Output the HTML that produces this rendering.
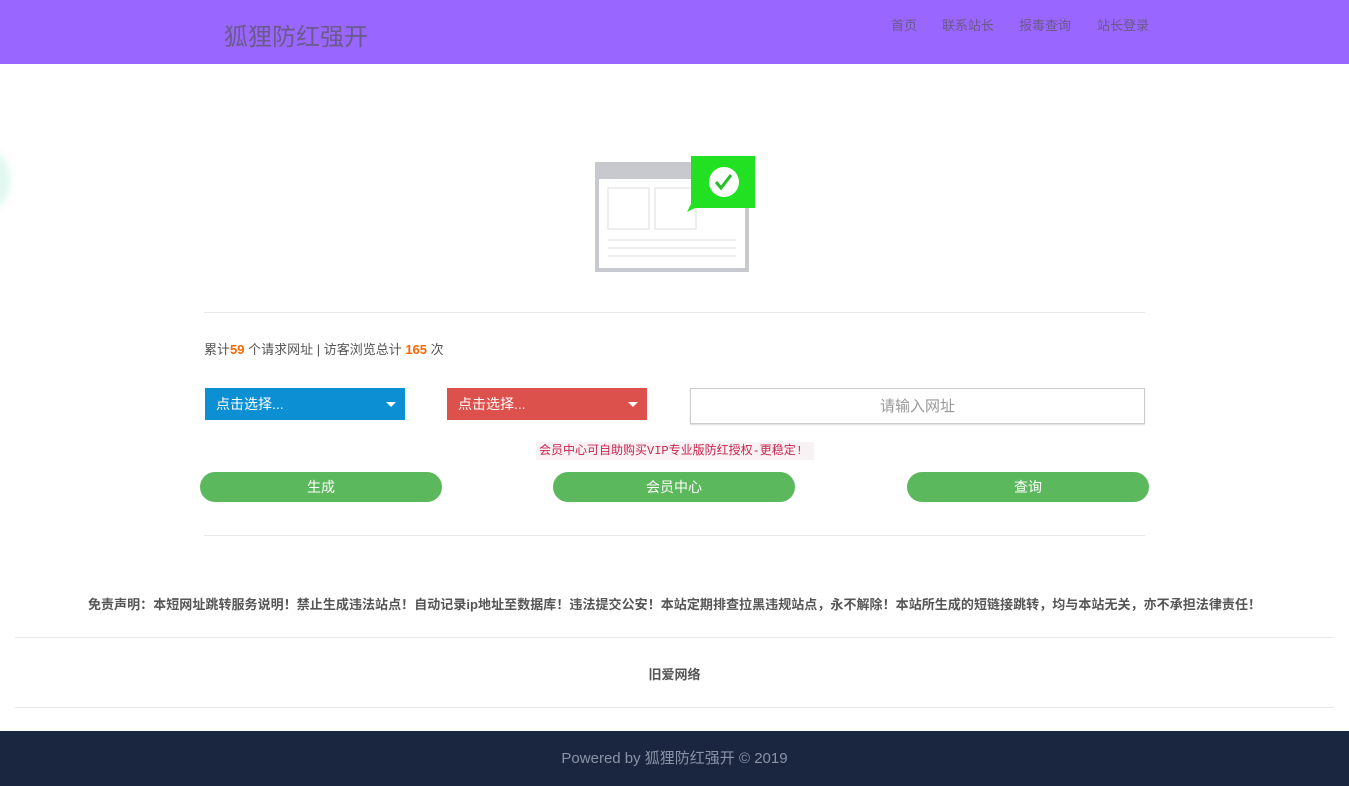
<!DOCTYPE html>
<html><head><meta charset="utf-8"><style>
*{margin:0;padding:0;box-sizing:border-box}
body{width:1349px;height:786px;background:#fff;font-family:"Liberation Sans","Noto Sans CJK SC",sans-serif;position:relative;overflow:hidden;color:#555}
.hdr{position:absolute;left:0;top:0;width:1349px;height:64px;background:#9966ff}
.logo{position:absolute;left:224px;top:17px;font-size:24px;color:#6b5a8a}
.nav{position:absolute;top:15px;font-size:13px;color:#6b5a8a}
.hr{position:absolute;height:1px;background:#e8e8e8}
.sel{position:absolute;top:388px;width:200px;height:32px;color:#fff;font-size:14px;padding:6px 11px}
.sel:after{content:"";position:absolute;right:9px;top:14px;border-left:5px solid transparent;border-right:5px solid transparent;border-top:5px solid #fff}
.btn{position:absolute;top:472px;width:242px;height:30px;border-radius:15px;background:#5cb85c;color:#fff;font-size:14px;text-align:center;line-height:30px}
</style></head><body>
<div class="hdr"></div>
<div class="logo">狐狸防红强开</div>
<div class="nav" style="left:891px">首页</div>
<div class="nav" style="left:942px">联系站长</div>
<div class="nav" style="left:1019px">报毒查询</div>
<div class="nav" style="left:1097px">站长登录</div>
<div style="position:absolute;left:-30px;top:150px;width:40px;height:60px;border-radius:50%;background:#dff8f0;filter:blur(4px)"></div>
<svg style="position:absolute;left:594px;top:155px" width="162" height="118">
<rect x="1" y="7" width="154" height="110" fill="#c8c9ce"/>
<rect x="5" y="24" width="146" height="89" fill="#fff"/>
<rect x="14" y="33" width="41" height="41" fill="#fff" stroke="#ddd"/>
<rect x="61" y="33" width="41" height="41" fill="#fff" stroke="#ddd"/>
<line x1="14" y1="85" x2="142" y2="85" stroke="#ddd"/>
<line x1="14" y1="93" x2="142" y2="93" stroke="#ddd"/>
<line x1="14" y1="101" x2="142" y2="101" stroke="#ddd"/>
<path d="M97 1H161V53H101L93 57L97 49Z" fill="#22e022"/>
<circle cx="130" cy="27" r="15" fill="#fff"/>
<path d="M122 27l5 6l10-13" stroke="#22c022" stroke-width="3" fill="none"/>
</svg>
<div class="hr" style="left:204px;top:312px;width:941px"></div>
<div style="position:absolute;left:204px;top:339px;font-size:13px">累计<b style="color:#f60">59</b> 个请求网址 | 访客浏览总计 <b style="color:#f60">165</b> 次</div>
<div class="sel" style="left:205px;background:#0d8fd4">点击选择...</div>
<div class="sel" style="left:447px;background:#dd514c">点击选择...</div>
<div style="position:absolute;left:690px;top:388px;width:455px;height:36px;border:1px solid #ccc;box-shadow:0 1px 1px #ddd;font-size:15px;color:#999;text-align:center;line-height:36px">请输入网址</div>
<div style="position:absolute;left:536px;top:442px;width:278px;height:18px;background:#f9f2f4;color:#c7254e;font-size:12px;line-height:18px;padding-left:3px;font-family:'Liberation Mono','Noto Sans CJK SC',monospace">会员中心可自助购买VIP专业版防红授权-更稳定!</div>
<div class="btn" style="left:200px">生成</div>
<div class="btn" style="left:553px">会员中心</div>
<div class="btn" style="left:907px">查询</div>
<div class="hr" style="left:204px;top:535px;width:941px"></div>
<div style="position:absolute;left:0;width:1349px;top:594px;text-align:center;font-size:13px;font-weight:bold;letter-spacing:0.05px">免责声明：本短网址跳转服务说明！禁止生成违法站点！自动记录ip地址至数据库！违法提交公安！本站定期排查拉黑违规站点，永不解除！本站所生成的短链接跳转，均与本站无关，亦不承担法律责任！</div>
<div class="hr" style="left:15px;top:637px;width:1319px"></div>
<div style="position:absolute;left:0;width:1349px;top:664px;text-align:center;font-size:13px;font-weight:bold">旧爱网络</div>
<div class="hr" style="left:15px;top:707px;width:1319px"></div>
<div style="position:absolute;left:0;top:731px;width:1349px;height:55px;background:#1a2640;color:#8a93a6;font-size:15px;text-align:center;line-height:55px">Powered by 狐狸防红强开 © 2019</div>
</body></html>
